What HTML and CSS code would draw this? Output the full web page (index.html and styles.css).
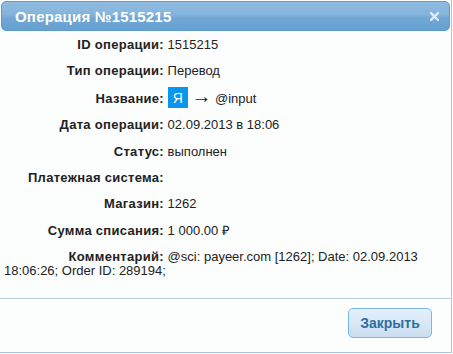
FILE: index.html
```html
<!DOCTYPE html>
<html lang="ru">
  <head>
    <meta charset="UTF-8" />
    <title>Операция №1515215</title>
    <link rel="stylesheet" href="styles.css">
  </head>
  <body>
    <div class="dialog">
      <div class="dialog-title">
        <span class="title-text">Операция №1515215</span>
        <span class="close">
          <svg width="9" height="9" viewBox="0 0 9 9">
            <path d="M1 1 L8 8 M8 1 L1 8" stroke="#e2ebf4" stroke-width="2.4" stroke-linecap="square" />
          </svg>
        </span>
      </div>

      <div class="dialog-content">
        <div class="row"><span class="label">ID операции:</span> 1515215</div>
        <div class="row"><span class="label">Тип операции:</span> Перевод</div>
        <div class="row">
          <span class="label">Название:</span>
          <span class="ya">Я</span> <span class="arrow">→</span> @input
        </div>
        <div class="row"><span class="label">Дата операции:</span> 02.09.2013 в 18:06</div>
        <div class="row"><span class="label">Статус:</span> выполнен</div>
        <div class="row"><span class="label">Платежная система:</span></div>
        <div class="row"><span class="label">Магазин:</span> 1262</div>
        <div class="row"><span class="label">Сумма списания:</span> 1 000.00 ₽</div>
        <div class="row">
          <span class="label">Комментарий:</span> @sci: payeer.com [1262]; Date: 02.09.2013 18:06:26; Order ID: 289194;
        </div>
      </div>

      <div class="dialog-buttons">
        <button>Закрыть</button>
      </div>
    </div>
  </body>
</html>
```

FILE: styles.css
```css
* {
  box-sizing: border-box;
}

body {
  margin: 0;
  background: #ffffff;
  font-family: 'Liberation Sans', Arial, sans-serif;
  font-size: 13px;
  color: #222222;
}

.dialog {
  width: 452px;
  height: 353px;
  padding: 1px;
  background: #fcfdfd;
  border-right: 1px solid #a6c9e2;
  border-bottom: 1px solid #a6c9e2;
  display: flex;
  flex-direction: column;
}

.dialog-title {
  display: flex;
  justify-content: space-between;
  align-items: center;
  width: 449px;
  height: 30px;
  padding: 0 10px 0 13px;
  border: 1px solid #5c9ccc;
  border-radius: 5px;
  background: linear-gradient(to bottom, #8fbbe0 0%, #85b4dc 45%, #70a6d4 58%, #66a1d2 100%);
  color: #ffffff;
  font-size: 15px;
  font-weight: bold;
  letter-spacing: 0.2px;
}

.close {
  display: flex;
  margin-top: 1px;
}

.dialog-content {
  flex: 1;
  padding: 7px 4px 0 3px;
}

.row {
  line-height: 14px;
  margin-bottom: 12.4px;
}

.label {
  display: inline-block;
  width: 160px;
  text-align: right;
  font-weight: bold;
  letter-spacing: 0.3px;
}

.ya {
  padding: 3px 5px 2px;
  background: #0a96ec;
  color: #ffffff;
  font-size: 14px;
}

.arrow {
  font-family: 'Liberation Serif', serif;
  font-size: 20px;
  line-height: 0;
}

.dialog-buttons {
  height: 53px;
  border-top: 1px solid #b6cde0;
  margin: 0 -1px;
  display: flex;
  justify-content: flex-end;
  align-items: flex-start;
  padding: 9px 19px 0 0;
}

button {
  width: 84px;
  height: 30px;
  border: 1px solid #79b7e7;
  border-radius: 5px;
  background: linear-gradient(to bottom, #e4f0fb 0%, #d8e8f6 50%, #c9def0 100%);
  color: #2e6e9e;
  font-family: 'Liberation Sans', Arial, sans-serif;
  font-size: 14px;
  font-weight: bold;
  cursor: pointer;
}
```
